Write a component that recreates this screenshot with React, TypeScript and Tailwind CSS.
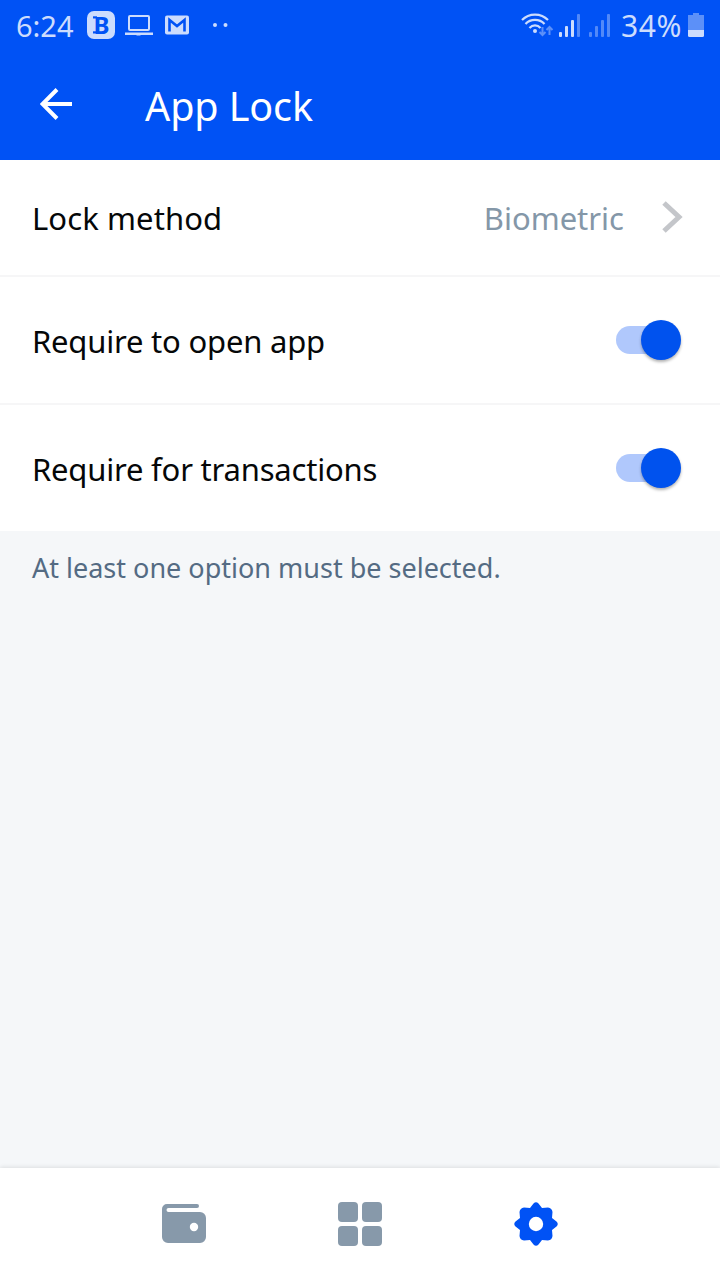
import React from 'react';

interface SettingToggleProps {
    label: string;
    border?: boolean;
}

const SignalBars: React.FC<{ level: number }> = ({ level }) => (
    <svg width="22" height="24" viewBox="0 0 22 24" fill="#ccdcfd">
        {[5, 11, 17, 23].map((height, index) => (
            <rect
                key={index}
                x={index * 6}
                y={24 - height}
                width="3"
                height={height}
                rx="1"
                opacity={index < level ? 1 : 0.4}
            />
        ))}
    </svg>
);

const StatusBar: React.FC = () => (
    <div className="flex h-[50px] items-center pl-4 pr-4 text-[#ccdcfd]">
        <span className="w-[71px] whitespace-nowrap text-[29px] leading-none">6:24</span>
        <svg className="overflow-visible" width="28" height="28" viewBox="0 0 28 28">
            <rect width="28" height="28" rx="7" fill="#ccdcfd" />
            <text x="6.500" y="22.500" fontSize="24" fontWeight="700" fontFamily="Noto Sans, sans-serif" fill="#0052f5">B</text>
            <rect x="6" y="5.300" width="4" height="2.200" fill="#0052f5" />
            <rect x="6" y="20.300" width="4" height="2.200" fill="#0052f5" />
        </svg>
        <svg className="ml-[10px]" width="28" height="22" viewBox="0 0 28 22">
            <rect x="4" y="2" width="20" height="14" rx="1" fill="none" stroke="#ccdcfd" strokeWidth="2" />
            <path d="M0 18.500h28V21H16l-1 .5h-3l-1-.5H0z" fill="#ccdcfd" />
        </svg>
        <svg className="ml-3" width="24" height="20" viewBox="0 0 24 20">
            <rect y="0.500" width="24" height="19" rx="2" fill="#ccdcfd" />
            <path d="M4.500 16.500V5l7.500 6 7.500-6v11.500" fill="none" stroke="#0052f5" strokeWidth="2.600" />
        </svg>
        <svg className="ml-6" width="15" height="4" viewBox="0 0 15 4" fill="#ccdcfd">
            <circle cx="2" cy="2" r="2" />
            <circle cx="12.500" cy="2" r="2" />
        </svg>
        <div className="ml-auto flex items-center">
            <svg width="34" height="26" viewBox="0 0 34 26" fill="none" stroke="#ccdcfd" strokeWidth="2.200">
                <path d="M1 8C8 .7 20 .7 27 8M4.500 12c5-5.500 14-5.500 19 0M8.500 16c3-3.500 8-3.500 11 0" />
                <circle cx="14" cy="19" r="2" fill="#ccdcfd" stroke="none" />
                <path d="M21.500 15v8M18.500 20l3 3 3-3M28.500 23v-8M25.500 18l3-3 3 3" opacity=".45" strokeWidth="2" />
            </svg>
            <div className="ml-[4px] flex gap-2">
                <SignalBars level={3} />
                <SignalBars level={0} />
            </div>
            <span className="ml-[10px] w-[67px] whitespace-nowrap pt-[2px] text-[30px] leading-none tracking-[0.6px]">34%</span>
            <svg width="16" height="24" viewBox="0 0 16 24" fill="#ccdcfd">
                <path d="M5 0h6v2h5v15H0V2h5z" opacity=".45" />
                <path d="M0 17h16v5.500a1.500 1.500 0 0 1-1.500 1.500h-13A1.500 1.500 0 0 1 0 22.500z" />
            </svg>
        </div>
    </div>
);

const SettingToggle: React.FC<SettingToggleProps> = ({ label, border }) => (
    <div className={`flex items-center justify-between pl-8 pr-[39px] ${border ? 'h-32 border-b-2 border-[#f6f6f7]' : 'h-[126px]'}`}>
        <span className="pt-[3px] text-[31px] leading-none tracking-[-0.2px]">{label}</span>
        <button className="flex h-7 w-[65px] items-center justify-end rounded-full bg-gradient-to-r from-[#b0c8fc] from-80% to-transparent to-80%">
            <span className="size-10 shrink-0 rounded-full bg-[#0052ee] shadow-[0_2px_3px_rgba(0,0,0,0.3)]"></span>
        </button>
    </div>
);

const App: React.FC = () => {
    return (
        <div className="flex h-[1280px] w-[720px] flex-col overflow-hidden bg-[#f5f7f9] font-['Noto_Sans',sans-serif] text-[#050708]">
            <header className="h-40 shrink-0 bg-[#0052f5]">
                <StatusBar />
                <div className="flex h-[110px] items-center pl-10 text-white">
                    <svg className="-mt-[2px]" width="33" height="32" viewBox="0 0 33 32" fill="none" stroke="currentColor" strokeWidth="4">
                        <path d="M17 1.500 2.500 16 17 30.500M3 16h29" />
                    </svg>
                    <h1 className="ml-[72px] pt-[3px] text-[39.5px] leading-none tracking-[-0.1px]">App Lock</h1>
                </div>
            </header>

            <main className="flex-1">
                <section className="bg-white">
                    <div className="flex h-[117px] items-center border-b-2 border-[#f6f6f7] pl-8 pr-[37px]">
                        <span className="pt-[2px] text-[31px] leading-none tracking-[0.1px]">Lock method</span>
                        <span className="ml-auto pt-[2px] text-[31px] leading-none text-[#8497a8]">Biometric</span>
                        <svg className="-mt-[2px] ml-[38px]" width="21" height="32" viewBox="0 0 21 32" fill="none" stroke="#c4c6ca" strokeWidth="5">
                            <path d="m2 2 15 14L2 30" />
                        </svg>
                    </div>
                    <SettingToggle label="Require to open app" border />
                    <SettingToggle label="Require for transactions" />
                </section>
                <p className="px-8 pt-[23px] text-[27px] leading-none text-[#546b83]">At least one option must be selected.</p>
            </main>

            <nav className="flex h-28 shrink-0 items-center justify-center gap-[132px] bg-white shadow-[0_-1px_4px_rgba(0,0,0,0.1)]">
                <svg width="44" height="44" viewBox="0 0 44 44" fill="#8799aa">
                    <path d="M5 2h30a2 2 0 0 1 0 4H6.500a2 2 0 0 0 0 4H38a6 6 0 0 1 6 6v19a6 6 0 0 1-6 6H6a6 6 0 0 1-6-6V7a5 5 0 0 1 5-5z" />
                    <circle cx="32" cy="25" r="4.200" fill="white" />
                </svg>
                <div className="grid grid-cols-2 gap-1">
                    <span className="size-5 rounded bg-[#8799aa]"></span>
                    <span className="size-5 rounded bg-[#8799aa]"></span>
                    <span className="size-5 rounded bg-[#8799aa]"></span>
                    <span className="size-5 rounded bg-[#8799aa]"></span>
                </div>
                <svg width="44" height="44" viewBox="0 0 44 44" fill="#0052f5">
                    <path d="M19.500 1.500Q22-1 24.500 1.500L28 6 34 5.500Q38 6 38.500 10L38 16 42.500 19.500Q45 22 42.500 24.500L38 28 38.500 34Q38 38 34 38.500L28 38 24.500 42.500Q22 45 19.500 42.500L16 38 10 38.500Q6 38 5.500 34L6 28 1.500 24.500Q-1 22 1.500 19.500L6 16 5.500 10Q6 6 10 5.500L16 6z" />
                    <circle cx="22" cy="22" r="7.200" fill="white" />
                </svg>
            </nav>
        </div>
    );
};

export default App;
